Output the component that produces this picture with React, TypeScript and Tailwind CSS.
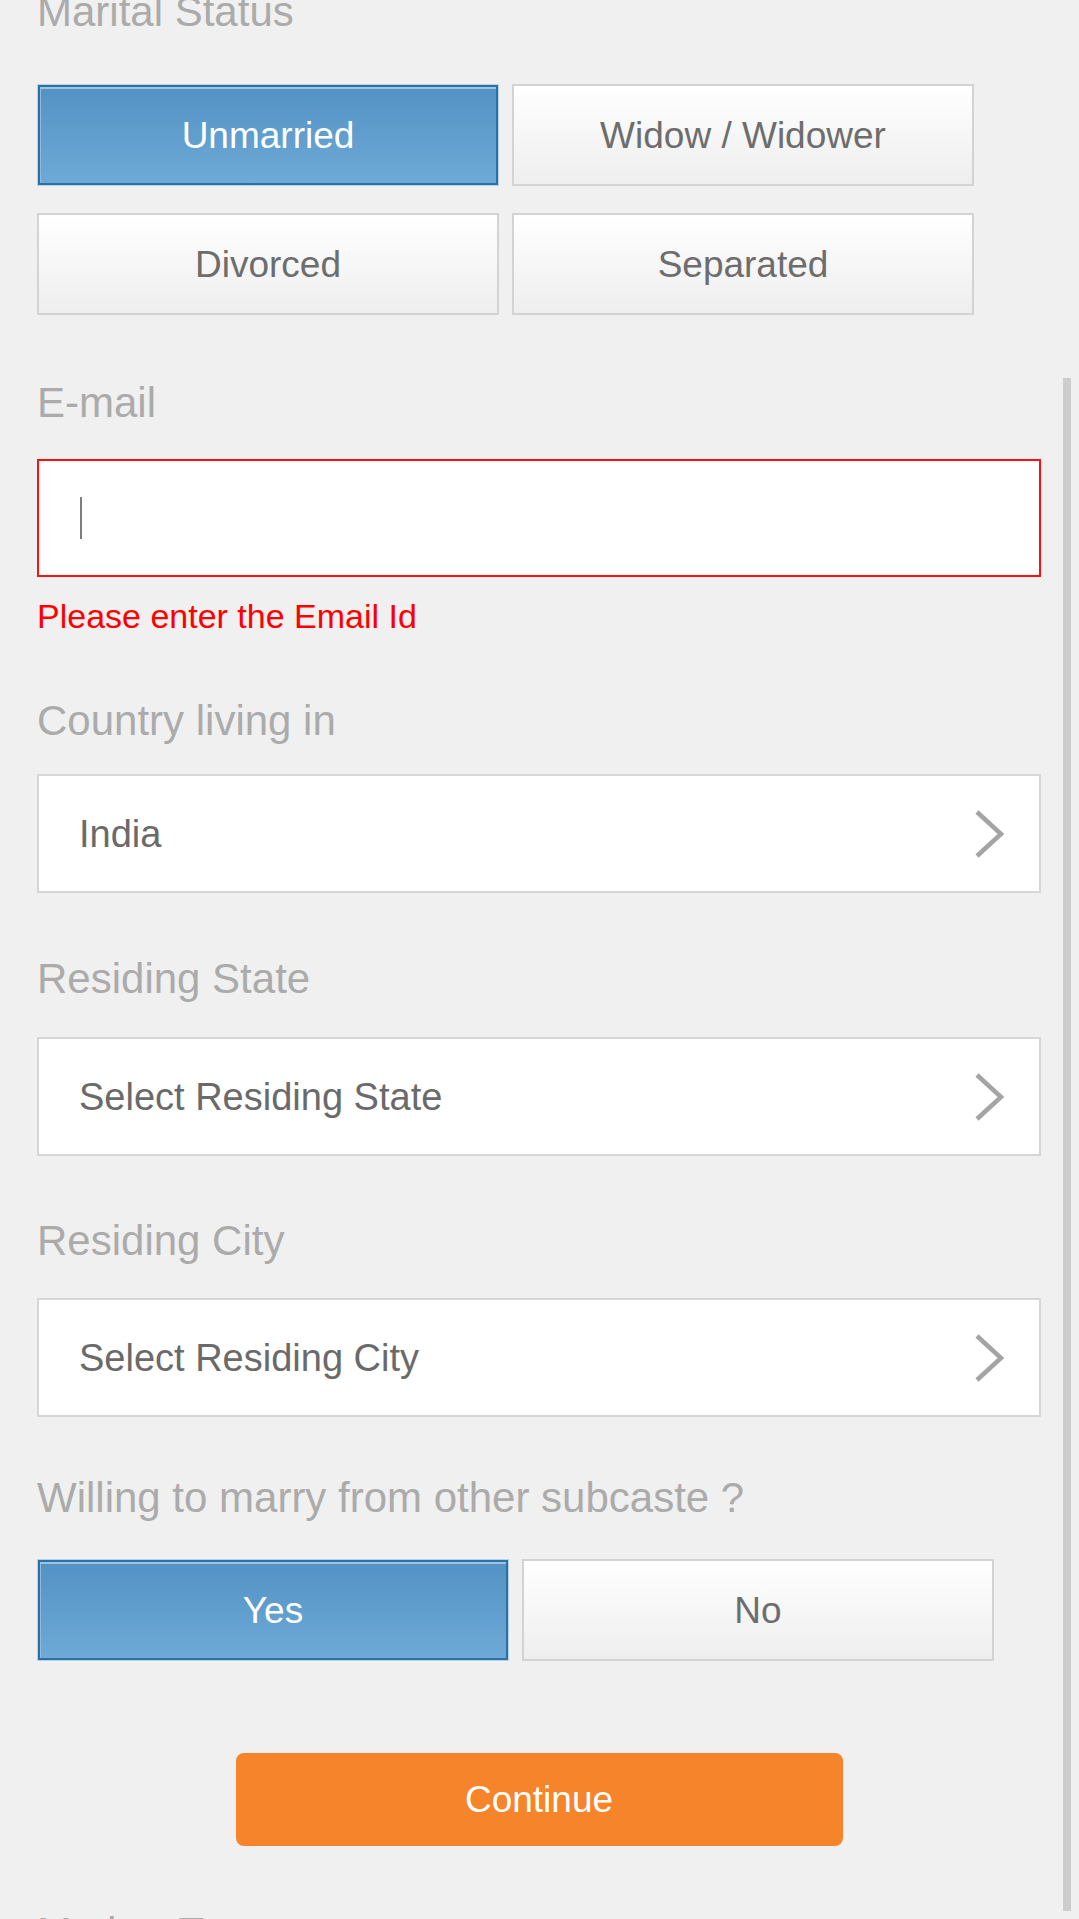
import type React from "react"

const font = { fontFamily: '"Liberation Sans", Arial, sans-serif' }

function Label({ children, className = "" }: { children: React.ReactNode; className?: string }) {
  return <div className={`text-[42px] leading-none text-[#ababab] whitespace-nowrap ${className}`}>{children}</div>
}

function Choice({ label, selected }: { label: string; selected?: boolean }) {
  if (selected) {
    return (
      <div className="h-[102px] border border-[#b9d1e4]">
        <div className="h-full flex items-center justify-center border-2 border-[#2c71a4] bg-linear-to-b from-[#5292c4] to-[#6eaad7] shadow-[inset_0_2px_0_#9cc3e2,inset_1px_0_0_#8fbadd] text-[37px] leading-none text-white">
          {label}
        </div>
      </div>
    )
  }
  return (
    <div className="h-[102px] flex items-center justify-center border-2 border-[#d3d3d3] bg-linear-to-b from-white to-[#eeeeee] text-[37px] leading-none text-[#6d6d6d]">
      {label}
    </div>
  )
}

function Chevron() {
  return (
    <svg width="32" height="50" viewBox="0 0 32 50" className="blur-[0.7px]">
      <polyline points="4,3 28,25 4,47" fill="none" stroke="#a4a4a4" strokeWidth="4.5" strokeLinejoin="miter" />
    </svg>
  )
}

function SelectBox({ value, className = "" }: { value: string; className?: string }) {
  return (
    <div className={`h-[119px] flex items-center justify-between border-2 border-[#d6d6d6] bg-white pl-[40px] pr-[34px] ${className}`}>
      <span className="text-[38px] leading-none text-[#6a6a6a]">{value}</span>
      <Chevron />
    </div>
  )
}

export default function App() {
  return (
    <div className="relative w-[1079px] h-[1919px] overflow-hidden bg-[#f0f0f0]" style={font}>
      <div className="pl-[37px] w-[1041px] flex flex-col">
        <Label className="-mt-[9px]">Marital Status</Label>
        <div className="mt-[51px] grid grid-cols-[462px_462px] gap-x-[13px] gap-y-[27px]">
          <Choice label="Unmarried" selected />
          <Choice label="Widow / Widower" />
          <Choice label="Divorced" />
          <Choice label="Separated" />
        </div>

        <Label className="mt-[67px]">E-mail</Label>
        <div className="mt-[35px] h-[118px] border-2 border-[#ff1010] bg-white flex items-center pl-[41px]">
          <div className="w-[2px] h-[42px] bg-[#7d7d7d]" />
        </div>
        <p className="mt-[22px] text-[34px] leading-none text-[#ff0000]">Please enter the Email Id</p>

        <Label className="mt-[67px]">Country living in</Label>
        <SelectBox value="India" className="mt-[32px]" />

        <Label className="mt-[65px]">Residing State</Label>
        <SelectBox value="Select Residing State" className="mt-[37px]" />

        <Label className="mt-[64px]">Residing City</Label>
        <SelectBox value="Select Residing City" className="mt-[36px]" />

        <Label className="mt-[60px]">Willing to marry from other subcaste ?</Label>
        <div className="mt-[40px] grid grid-cols-[472px_472px] gap-x-[13px]">
          <Choice label="Yes" selected />
          <Choice label="No" />
        </div>

        <button className="mt-[92px] mx-auto w-[607px] h-[93px] rounded-[8px] bg-[#f5842a] text-[37px] leading-none text-white">
          Continue
        </button>

        <Label className="mt-[66px]">Mother Tongue</Label>
      </div>

      <div className="absolute left-[1063px] top-[378px] w-[8px] h-[1533px] bg-[#cdcdcd]" />
    </div>
  )
}
